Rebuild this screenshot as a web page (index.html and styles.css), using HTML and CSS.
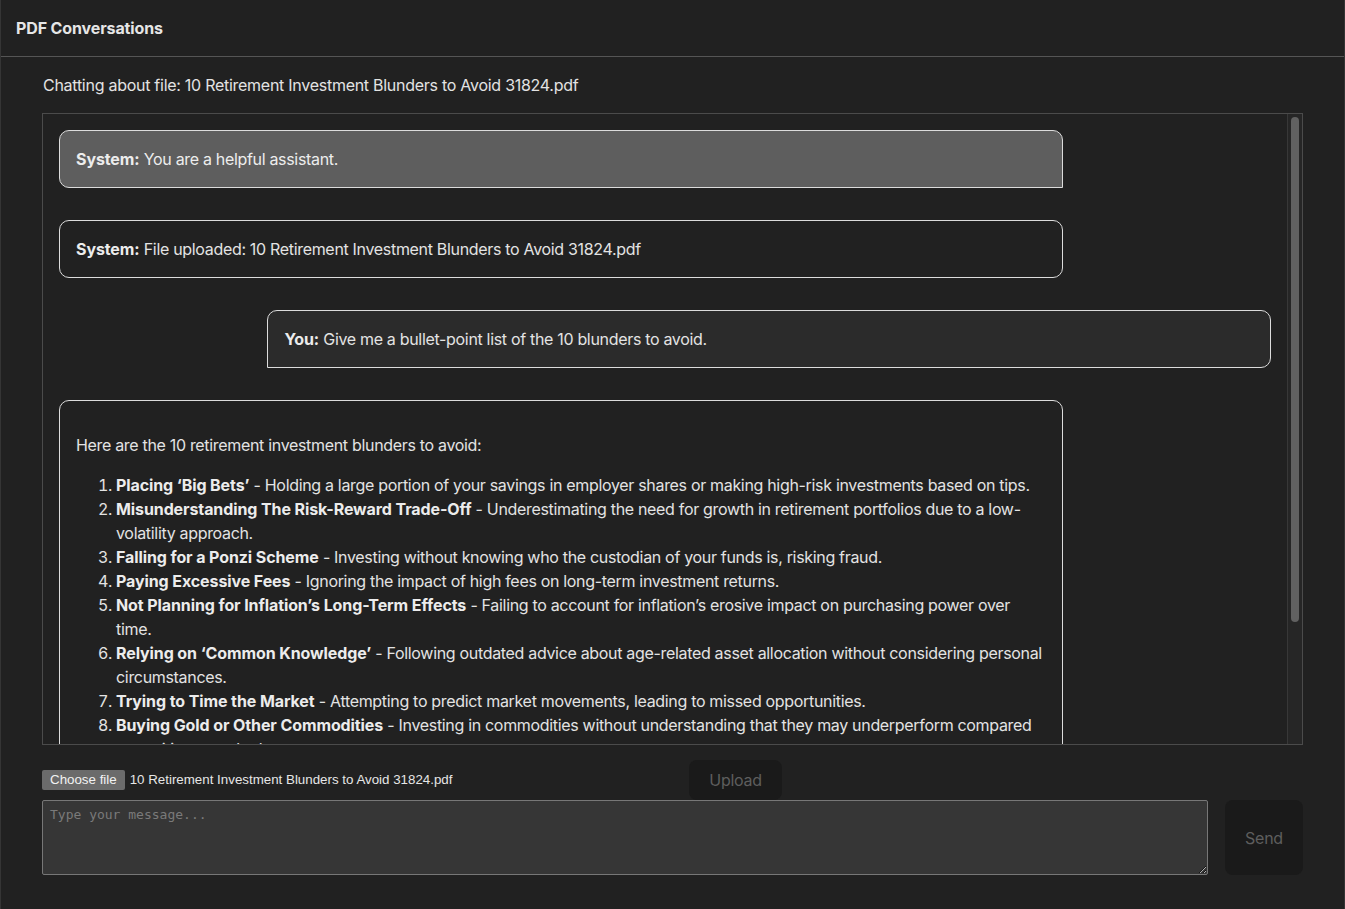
FILE: index.html
```html
<!DOCTYPE html>
<html lang="en">
<head>
<meta charset="utf-8">
<title>PDF Conversations</title>
<link rel="stylesheet" href="styles.css">
</head>
<body>
<div class="app">
  <header class="topbar">
    <h1 class="title">PDF Conversations</h1>
  </header>
  <main class="main">
    <p class="file-info">Chatting about file: 10 Retirement Investment Blunders to Avoid 31824.pdf</p>
    <div class="chat-frame">
      <div class="chat">
        <div class="msg msg-system-first"><strong>System:</strong> You are a helpful assistant.</div>
        <div class="msg msg-system"><strong>System:</strong> File uploaded: 10 Retirement Investment Blunders to Avoid 31824.pdf</div>
        <div class="msg msg-user"><strong>You:</strong> Give me a bullet-point list of the 10 blunders to avoid.</div>
        <div class="msg msg-assistant">
          <p>Here are the 10 retirement investment blunders to avoid:</p>
          <ol>
            <li><strong>Placing ‘Big Bets’</strong> - Holding a large portion of your savings in employer shares or making high-risk investments based on tips.</li>
            <li><strong>Misunderstanding The Risk-Reward Trade-Off</strong> - Underestimating the need for growth in retirement portfolios due to a low-volatility approach.</li>
            <li><strong>Falling for a Ponzi Scheme</strong> - Investing without knowing who the custodian of your funds is, risking fraud.</li>
            <li><strong>Paying Excessive Fees</strong> - Ignoring the impact of high fees on long-term investment returns.</li>
            <li><strong>Not Planning for Inflation’s Long-Term Effects</strong> - Failing to account for inflation’s erosive impact on purchasing power over time.</li>
            <li><strong>Relying on ‘Common Knowledge’</strong> - Following outdated advice about age-related asset allocation without considering personal circumstances.</li>
            <li><strong>Trying to Time the Market</strong> - Attempting to predict market movements, leading to missed opportunities.</li>
            <li><strong>Buying Gold or Other Commodities</strong> - Investing in commodities without understanding that they may underperform compared to equities over the long term.</li>
            <li><strong>Not Diversifying Your Portfolio</strong> - Concentrating savings in a few assets or sectors instead of spreading risk across different asset classes and regions.</li>
            <li><strong>Ignoring Professional Advice</strong> - Making major retirement decisions alone without consulting a qualified financial adviser about your long-term plan.</li>
          </ol>
        </div>
      </div>
      <div class="scroll-track" aria-hidden="true">
        <div class="scroll-thumb"></div>
      </div>
    </div>
    <div class="upload-row">
      <label class="file-picker">
        <span class="file-btn">Choose file</span>
        <span class="file-name">10 Retirement Investment Blunders to Avoid 31824.pdf</span>
      </label>
      <button class="btn btn-upload" type="button">Upload</button>
    </div>
    <div class="send-row">
      <textarea class="message" placeholder="Type your message..."></textarea>
      <button class="btn btn-send" type="button">Send</button>
    </div>
  </main>
</div>
</body>
</html>
```

FILE: styles.css
```css
* { box-sizing: border-box; }

html, body {
  margin: 0;
  height: 100%;
  background: #212121;
}

body {
  font-family: Inter, "Noto Sans", "Liberation Sans", sans-serif;
  color: #e3e3e3;
  font-size: 16px;
  line-height: 24px;
  letter-spacing: -0.27px;
}

.app {
  height: 909px;
  border-left: 1px solid #353535;
  border-right: 1px solid #353535;
  overflow: hidden;
}

.topbar {
  height: 57px;
  border-bottom: 1px solid #555555;
  display: flex;
  align-items: center;
  padding: 0 15px;
}

.title {
  margin: 0;
  font-size: 16px;
  font-weight: 700;
  color: #e6e6e6;
  line-height: 24px;
  letter-spacing: -0.12px;
}

.main {
  padding: 16px 41px 0 41px;
}

.file-info {
  margin: 0 0 16px 1px;
  color: #e3e3e3;
}

.chat-frame {
  height: 632px;
  border: 1px solid #4b4b4b;
  display: flex;
}

.chat {
  flex: 1;
  min-width: 0;
  padding: 16px;
  overflow-y: auto;
  scrollbar-width: none;
}

.chat::-webkit-scrollbar {
  display: none;
}

.scroll-track {
  width: 15px;
  flex: none;
  background: #262626;
  border-left: 1px solid #383838;
  padding: 3px 3px 0 3px;
}

.scroll-thumb {
  width: 8px;
  height: 505px;
  background: #616161;
  border-radius: 4px;
}

.msg {
  box-sizing: content-box;
  width: 80%;
  padding: 16px;
  border: 1px solid #dcdcdc;
  border-radius: 10px;
  color: #e3e3e3;
  letter-spacing: -0.32px;
}

.msg + .msg {
  margin-top: 32px;
}

.msg strong {
  font-weight: 700;
  color: #ececec;
  letter-spacing: -0.1px;
}

.msg-system-first {
  background: #5e5e5e;
  border-bottom-right-radius: 0;
  color: #ededed;
}

.msg-system {
  background: #212121;
}

.msg-user {
  background: #2b2b2b;
  margin-left: auto;
  border-bottom-left-radius: 0;
}

.msg-assistant {
  background: #212121;
}

.msg-assistant p {
  margin: 16px 0;
}

.msg-assistant ol {
  margin: 16px 0;
  padding-left: 40px;
}

.upload-row {
  display: flex;
  align-items: center;
  margin-top: 15px;
  height: 40px;
}

.file-picker {
  width: 647px;
  display: flex;
  align-items: center;
  font-family: "Liberation Sans", Arial, sans-serif;
  font-size: 13.33px;
  line-height: 16px;
  letter-spacing: 0;
  color: #e6e6e6;
}

.file-btn {
  background: #6b6b6b;
  color: #f2f2f2;
  border-radius: 2px;
  padding: 2px 8px;
  height: 20px;
  margin-right: 5px;
}

.btn {
  font-family: Inter, "Noto Sans", "Liberation Sans", sans-serif;
  font-size: 16px;
  line-height: 24px;
  letter-spacing: -0.27px;
  background: #1a1a1a;
  color: #5e5e5e;
  border: none;
  border-radius: 8px;
}

.btn-upload {
  width: 93px;
  height: 40px;
  padding: 0;
}

.send-row {
  display: flex;
  gap: 17px;
}

.message {
  flex: 1;
  height: 75px;
  background: #363636;
  border: 1px solid #777777;
  border-radius: 2px;
  padding: 6px 7px;
  font-family: "DejaVu Sans Mono", monospace;
  font-size: 13px;
  line-height: 16px;
  letter-spacing: 0;
  color: #e3e3e3;
  resize: vertical;
}

.message::placeholder {
  color: #7a7a7a;
}

.btn-send {
  width: 78px;
  height: 75px;
  padding: 0;
}
```
